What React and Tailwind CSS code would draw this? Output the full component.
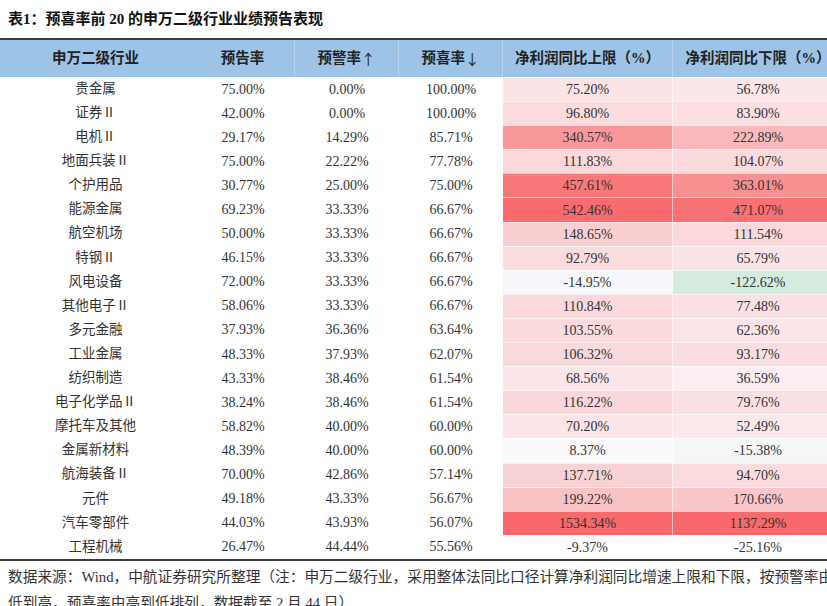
const rows = [
  ["贵金属", "75.00%", "0.00%", "100.00%", "75.20%", "#fbe3e6", "56.78%", "#fbe6e9"],
  ["证券Ⅱ", "42.00%", "0.00%", "100.00%", "96.80%", "#fadbde", "83.90%", "#fbdfe2"],
  ["电机Ⅱ", "29.17%", "14.29%", "85.71%", "340.57%", "#f8989a", "222.89%", "#f9b9bc"],
  ["地面兵装Ⅱ", "75.00%", "22.22%", "77.78%", "111.83%", "#fad8db", "104.07%", "#fadadd"],
  ["个护用品", "30.77%", "25.00%", "75.00%", "457.61%", "#f87779", "363.01%", "#f88f91"],
  ["能源金属", "69.23%", "33.33%", "66.67%", "542.46%", "#f86b6e", "471.07%", "#f87275"],
  ["航空机场", "50.00%", "33.33%", "66.67%", "148.65%", "#f9cfd2", "111.54%", "#fad8db"],
  ["特钢Ⅱ", "46.15%", "33.33%", "66.67%", "92.79%", "#fadcdf", "65.79%", "#fbe4e7"],
  ["风电设备", "72.00%", "33.33%", "66.67%", "-14.95%", "#f6f7fa", "-122.62%", "#d4ebdd"],
  ["其他电子Ⅱ", "58.06%", "33.33%", "66.67%", "110.84%", "#fad8db", "77.48%", "#fbe1e4"],
  ["多元金融", "37.93%", "36.36%", "63.64%", "103.55%", "#fadadd", "62.36%", "#fbe5e8"],
  ["工业金属", "48.33%", "37.93%", "62.07%", "106.32%", "#fad9dc", "93.17%", "#fadde0"],
  ["纺织制造", "43.33%", "38.46%", "61.54%", "68.56%", "#fbe5e8", "36.59%", "#fbedf0"],
  ["电子化学品Ⅱ", "38.24%", "38.46%", "61.54%", "116.22%", "#fad7da", "79.76%", "#fbe0e3"],
  ["摩托车及其他", "58.82%", "40.00%", "60.00%", "70.20%", "#fbe5e8", "52.49%", "#fbe8eb"],
  ["金属新材料", "48.39%", "40.00%", "60.00%", "8.37%", "#fcf9fc", "-15.38%", "#f5f7f6"],
  ["航海装备Ⅱ", "70.00%", "42.86%", "57.14%", "137.71%", "#f9d2d5", "94.70%", "#fadcdf"],
  ["元件", "49.18%", "43.33%", "56.67%", "199.22%", "#f9c3c6", "170.66%", "#f9c7ca"],
  ["汽车零部件", "44.03%", "43.93%", "56.07%", "1534.34%", "#f8696b", "1137.29%", "#f8696b"],
  ["工程机械", "26.47%", "44.44%", "55.56%", "-9.37%", "#ffffff", "-25.16%", "#ffffff"],
];

const cols = "grid grid-cols-[191px_104px_104px_104px_170px_170px]";

export default function App() {
  return (
    <div
      className="w-[827px] h-[606px] overflow-hidden bg-white text-[#333]"
      style={{ fontFamily: '"Liberation Serif", "Noto Sans CJK SC", serif' }}
    >
      <div className="w-[843px]">
        <div className="h-[38px] flex items-center pl-2 text-[15px] font-bold text-[#111]">
          表1：预喜率前 20 的申万二级行业业绩预告表现
        </div>

        <div className="border-t-2 border-b-2 border-[#3a3a3a]">
          <div className={`${cols} h-[37px] bg-[#9dc3e6] text-[14.5px] font-bold text-[#222]`}>
            <div className="flex items-center justify-center">申万二级行业</div>
            <div className="flex items-center justify-center border-r border-[#b9d4ec]">预告率</div>
            <div className="flex items-center justify-center border-r border-[#b9d4ec]">
              预警率<span className="font-['Noto_Sans_CJK_SC'] font-normal">↑</span>
            </div>
            <div className="flex items-center justify-center border-r border-[#b9d4ec]">
              预喜率<span className="font-['Noto_Sans_CJK_SC'] font-normal">↓</span>
            </div>
            <div className="flex items-center justify-center border-r border-[#b9d4ec]">净利润同比上限（%）</div>
            <div className="flex items-center justify-center">净利润同比下限（%）</div>
          </div>

          {rows.map((r) => (
            <div key={r[0]} className={`${cols} h-[24.1px] text-[14px]`}>
              <div className="flex items-center justify-center text-[13.5px]">{r[0]}</div>
              <div className="flex items-center justify-center">{r[1]}</div>
              <div className="flex items-center justify-center">{r[2]}</div>
              <div className="flex items-center justify-center">{r[3]}</div>
              <div
                className="flex items-center justify-center border-t border-r border-white/60"
                style={{ backgroundColor: r[5] }}
              >
                {r[4]}
              </div>
              <div
                className="flex items-center justify-center border-t border-white/60"
                style={{ backgroundColor: r[7] }}
              >
                {r[6]}
              </div>
            </div>
          ))}
        </div>

        <div className="pt-[3px] pl-2 text-[14.7px] leading-[26px] text-[#333]">
          数据来源：Wind，中航证券研究所整理（注：申万二级行业，采用整体法同比口径计算净利润同比增速上限和下限，按预警率由低到高，预喜率由高到低排列，数据截至 2 月 44 日）
        </div>
      </div>
    </div>
  );
}
